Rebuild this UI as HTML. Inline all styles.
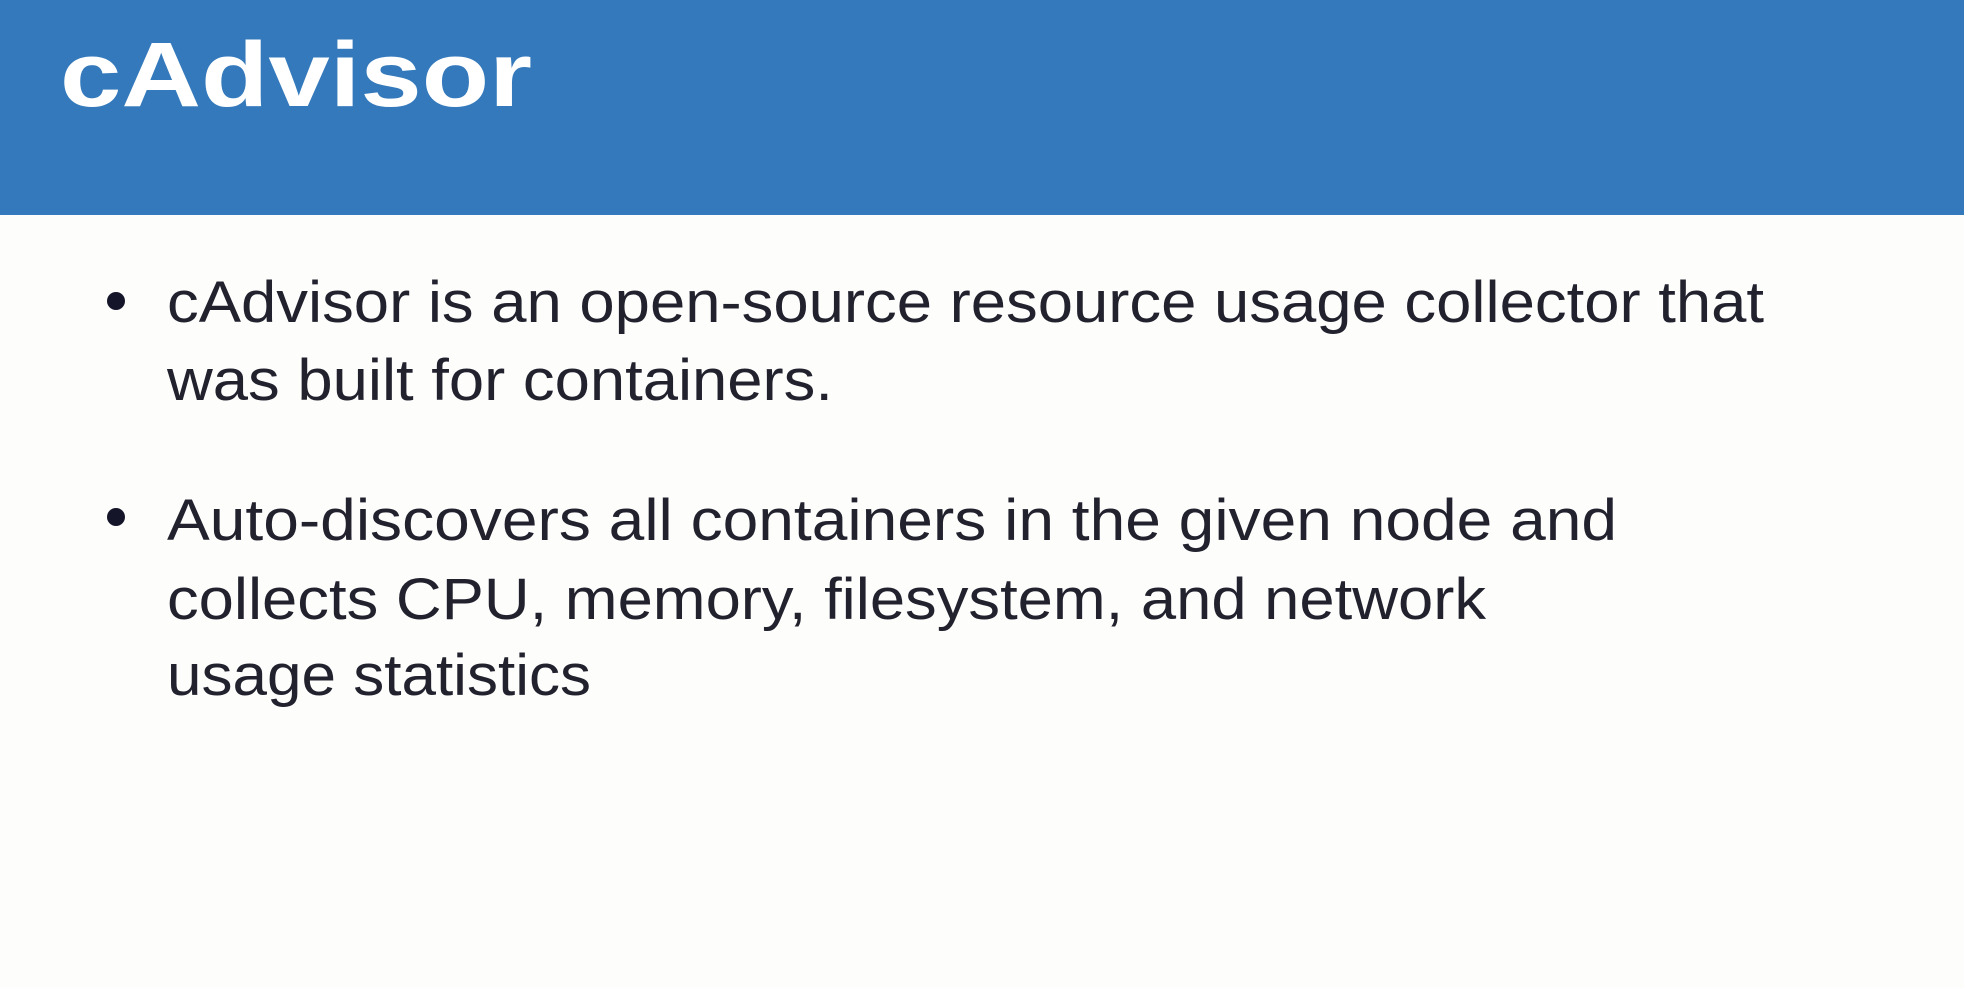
<!DOCTYPE html>
<html><head><meta charset="utf-8"><style>
html,body{margin:0;padding:0;width:1964px;height:988px;overflow:hidden;background:#fdfdfc;}
svg{display:block}
</style></head><body>
<svg width="1964" height="988" viewBox="0 0 1964 988" xmlns="http://www.w3.org/2000/svg">
<rect x="0" y="0" width="1964" height="988" fill="#fdfdfc"/>
<rect x="0" y="0" width="1964" height="215" fill="#3479bb"/>
<text x="60" y="106" font-family="Liberation Sans, sans-serif" font-weight="bold" font-size="92" fill="#ffffff" textLength="472" lengthAdjust="spacingAndGlyphs">cAdvisor</text>
<g font-family="Liberation Sans, sans-serif" font-size="58" fill="#22222f">
<circle cx="116" cy="301" r="9" fill="#15152a"/>
<text x="167" y="322" textLength="1597" lengthAdjust="spacingAndGlyphs">cAdvisor is an open-source resource usage collector that</text>
<text x="167" y="400" textLength="666" lengthAdjust="spacingAndGlyphs">was built for containers.</text>
<circle cx="116" cy="517" r="9" fill="#15152a"/>
<text x="167" y="540" textLength="1450" lengthAdjust="spacingAndGlyphs">Auto-discovers all containers in the given node and</text>
<text x="167" y="619" textLength="1319" lengthAdjust="spacingAndGlyphs">collects CPU, memory, filesystem, and network</text>
<text x="167" y="695" textLength="424" lengthAdjust="spacingAndGlyphs">usage statistics</text>
</g>
</svg>
</body></html>
